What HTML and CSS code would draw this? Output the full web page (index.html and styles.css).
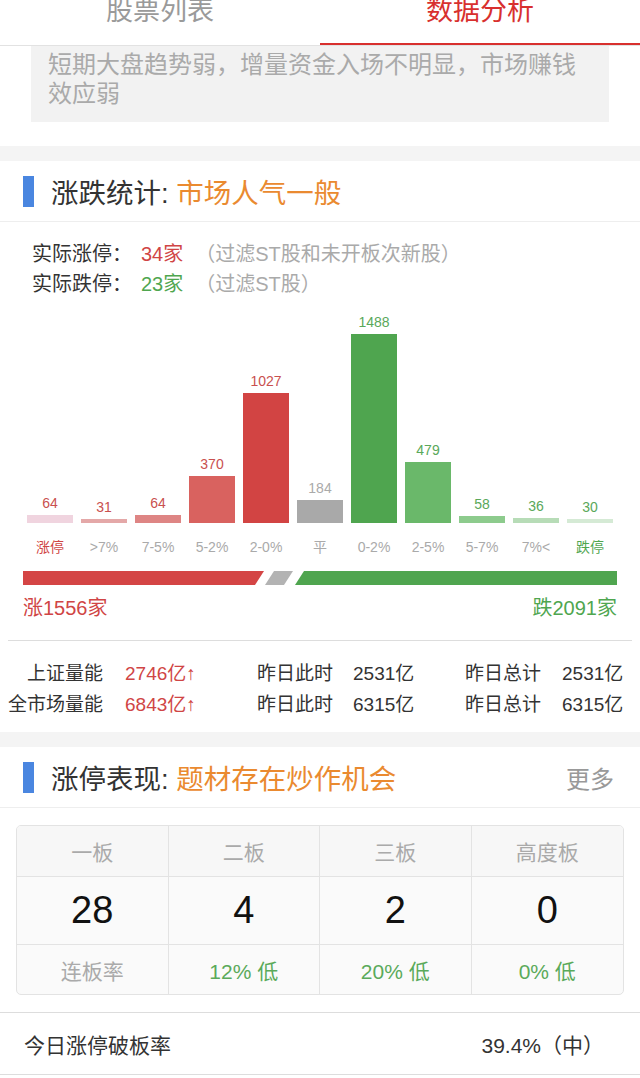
FILE: index.html
```html
<!DOCTYPE html>
<html lang="zh-CN">
<head>
  <meta charset="UTF-8" />
  <meta name="viewport" content="width=device-width, initial-scale=1.0"/>
  <title>数据分析</title>
  <link rel="stylesheet" href="styles.css">
</head>
<body>
  <div class="tabs">
    <div class="tab">股票列表</div>
    <div class="tab active">数据分析</div>
  </div>

  <div class="summary">短期大盘趋势弱，增量资金入场不明显，市场赚钱效应弱</div>

  <div class="section">
    <div class="section-head">
      <span class="mark"></span>
      <span class="title">涨跌统计: </span><span class="title-hl">市场人气一般</span>
    </div>

    <div class="limits">
      <p>实际涨停：<span class="num red">34家</span><span class="note">（过滤ST股和未开板次新股）</span></p>
      <p>实际跌停：<span class="num green">23家</span><span class="note">（过滤ST股）</span></p>
    </div>

    <div class="chart">
      <div class="col"><span class="val red">64</span><div class="bar up1" style="height:8px"></div></div>
      <div class="col"><span class="val red">31</span><div class="bar up2" style="height:4px"></div></div>
      <div class="col"><span class="val red">64</span><div class="bar up3" style="height:8px"></div></div>
      <div class="col"><span class="val red">370</span><div class="bar up4" style="height:47px"></div></div>
      <div class="col"><span class="val red">1027</span><div class="bar up5" style="height:130px"></div></div>
      <div class="col"><span class="val grey">184</span><div class="bar flat" style="height:23px"></div></div>
      <div class="col"><span class="val green">1488</span><div class="bar dn5" style="height:189px"></div></div>
      <div class="col"><span class="val green">479</span><div class="bar dn4" style="height:61px"></div></div>
      <div class="col"><span class="val green">58</span><div class="bar dn3" style="height:7px"></div></div>
      <div class="col"><span class="val green">36</span><div class="bar dn2" style="height:5px"></div></div>
      <div class="col"><span class="val green">30</span><div class="bar dn1" style="height:4px"></div></div>
    </div>
    <div class="chart-labels">
      <span class="red">涨停</span>
      <span>&gt;7%</span>
      <span>7-5%</span>
      <span>5-2%</span>
      <span>2-0%</span>
      <span>平</span>
      <span>0-2%</span>
      <span>2-5%</span>
      <span>5-7%</span>
      <span>7%&lt;</span>
      <span class="green">跌停</span>
    </div>

    <svg class="ratio" width="594" height="14" viewBox="0 0 594 14">
      <polygon points="0,0 241,0 232,14 0,14" fill="#d44545"/>
      <polygon points="251,0 270,0 261,14 242,14" fill="#b3b3b3"/>
      <polygon points="281,0 594,0 594,14 272,14" fill="#4fa54f"/>
    </svg>
    <div class="counts">
      <span class="red">涨1556家</span>
      <span class="green">跌2091家</span>
    </div>

    <div class="volume">
      <span class="lbl">上证量能</span><span class="v red">2746亿↑</span>
      <span>昨日此时</span><span>2531亿</span>
      <span>昨日总计</span><span>2531亿</span>
      <span class="lbl">全市场量能</span><span class="v red">6843亿↑</span>
      <span>昨日此时</span><span>6315亿</span>
      <span>昨日总计</span><span>6315亿</span>
    </div>
  </div>

  <div class="section">
    <div class="section-head">
      <span class="mark"></span>
      <span class="title">涨停表现: </span><span class="title-hl">题材存在炒作机会</span>
      <span class="more">更多</span>
    </div>

    <div class="board">
      <div class="cell head">一板</div>
      <div class="cell head">二板</div>
      <div class="cell head">三板</div>
      <div class="cell head">高度板</div>
      <div class="cell big">28</div>
      <div class="cell big">4</div>
      <div class="cell big">2</div>
      <div class="cell big">0</div>
      <div class="cell rate">连板率</div>
      <div class="cell rate green">12% 低</div>
      <div class="cell rate green">20% 低</div>
      <div class="cell rate green">0% 低</div>
    </div>

    <div class="break-row">
      <span>今日涨停破板率</span>
      <span>39.4%（中）</span>
    </div>
  </div>
</body>
</html>
```

FILE: styles.css
```css
body {
  margin: 0;
  font-family: "Liberation Sans", "Noto Sans CJK SC", sans-serif;
  background: #fff;
  color: #333;
}
p {
  margin: 0;
}
.red {
  color: #d04545;
}
.green {
  color: #4fa64f;
}
.grey {
  color: #aaa;
}

.tabs {
  display: flex;
  border-bottom: 1px solid #e2e2e2;
}
.tab {
  flex: 1;
  height: 45px;
  box-sizing: border-box;
  display: flex;
  align-items: flex-end;
  justify-content: center;
  padding-bottom: 18px;
  font-size: 27px;
  line-height: 27px;
  color: #9a9a9a;
  border-bottom: 2px solid transparent;
}
.tab.active {
  color: #d8302e;
  border-bottom-color: #d8302e;
}

.summary {
  margin: 0 31px;
  padding: 4px 17px 14px;
  background: #f2f2f2;
  color: #aaa;
  font-size: 24px;
  line-height: 29px;
}

.section {
  margin-top: 24px;
  border-top: 15px solid #f4f4f4;
}
.section + .section {
  margin-top: 12px;
}
.section-head {
  display: flex;
  align-items: center;
  height: 60px;
  padding: 0 26px 0 23px;
  border-bottom: 1px solid #eee;
  font-size: 27.5px;
}
.mark {
  width: 11px;
  height: 31px;
  background: #4a86e0;
  margin-right: 17px;
}
.title {
  color: #333;
  white-space: pre;
}
.title-hl {
  color: #ea8a30;
}
.more {
  margin-left: auto;
  font-size: 24px;
  color: #999;
}

.limits {
  padding: 17px 0 0 32px;
  font-size: 20px;
  line-height: 30px;
  color: #333;
}
.limits .num {
  margin-left: 9px;
}
.limits .note {
  margin-left: 12px;
  color: #aaa;
}

.chart,
.chart-labels {
  display: flex;
  gap: 8px;
  padding: 0 27px;
}
.chart {
  margin-top: 15px;
  align-items: flex-end;
}
.col {
  width: 46px;
  display: flex;
  flex-direction: column;
  align-items: center;
}
.val {
  font-size: 14px;
  line-height: 16px;
  margin-bottom: 4px;
}
.val.red {
  color: #c9504f;
}
.val.green {
  color: #5aa85a;
}
.bar {
  width: 100%;
}
.up1 { background: #f0d4df; }
.up2 { background: #e4a8a8; }
.up3 { background: #de8584; }
.up4 { background: #d9625f; }
.up5 { background: #d24443; }
.flat { background: #a9a9a9; }
.dn5 { background: #4fa54f; }
.dn4 { background: #6ab86a; }
.dn3 { background: #8dcb8d; }
.dn2 { background: #b7dcb7; }
.dn1 { background: #d5ead5; }

.chart-labels {
  margin-top: 14px;
  font-size: 14px;
  line-height: 20px;
  color: #aaa;
}
.chart-labels span {
  width: 46px;
  text-align: center;
}

.ratio {
  display: block;
  margin: 14px 0 0 23px;
}
.counts {
  display: flex;
  justify-content: space-between;
  padding: 0 23px;
  margin-top: 11px;
  font-size: 20px;
  line-height: 24px;
}

.volume {
  display: grid;
  grid-template-columns: 95px 154px 96px 112px 97px 1fr;
  margin: 20px 8px 0;
  padding-top: 17px;
  border-top: 1px solid #ddd;
  font-size: 19px;
  line-height: 31px;
  color: #333;
  white-space: nowrap;
}
.volume .lbl {
  text-align: right;
}
.volume .v {
  padding-left: 22px;
}

.board {
  display: grid;
  grid-template-columns: repeat(4, 1fr);
  margin: 17px 16px 0;
  border: 1px solid #e3e3e3;
  border-radius: 5px;
  overflow: hidden;
  background: #fafafa;
}
.cell {
  display: flex;
  align-items: center;
  justify-content: center;
  border-right: 1px solid #e3e3e3;
  border-bottom: 1px solid #e3e3e3;
}
.cell:nth-child(4n) {
  border-right: none;
}
.cell:nth-child(n+9) {
  border-bottom: none;
}
.head {
  height: 50px;
  font-size: 21px;
  color: #aaa;
  background: #f7f7f7;
}
.big {
  height: 67px;
  font-size: 38px;
  color: #111;
}
.rate {
  height: 49px;
  font-size: 21px;
  color: #aaa;
}
.rate.green {
  color: #5aaa5a;
}

.break-row {
  display: flex;
  justify-content: space-between;
  align-items: center;
  height: 61px;
  margin-top: 17px;
  padding: 0 36px 0 24px;
  border-top: 1px solid #ddd;
  border-bottom: 1px solid #ddd;
  font-size: 21px;
  color: #333;
}
```
